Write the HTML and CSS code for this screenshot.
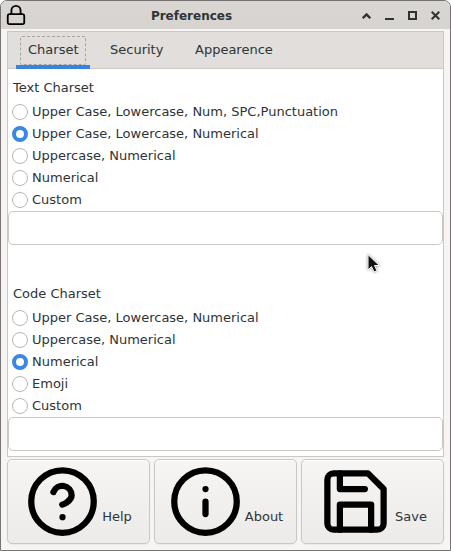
FILE: index.html
```html
<!DOCTYPE html>
<html lang="en">
<head>
<meta charset="utf-8">
<title>Preferences</title>
<link rel="stylesheet" href="styles.css">
</head>
<body>
<div class="window">
  <header class="titlebar">
    <svg class="lock" viewBox="0 0 24 24"><rect x="3" y="11" width="18" height="11" rx="2"/><path d="M7 11V7a5 5 0 0 1 10 0v4"/></svg>
    <h1 class="title">Preferences</h1>
    <div class="controls">
      <svg class="shade" viewBox="0 0 9 9"><path d="M.7 7.200 4.500 3.400l3.800 3.800"/></svg>
      <svg viewBox="0 0 9 9"><path d="M0 8h9"/></svg>
      <svg viewBox="0 0 9 9"><path d="M1 1h7v7H1z"/></svg>
      <svg viewBox="0 0 9 9"><path d="m.7.7 7.6 7.6M8.3.7.7 8.3"/></svg>
    </div>
  </header>
  <main class="notebook">
    <nav class="tabs">
      <div class="tab active"><span class="tab-label">Charset</span></div>
      <div class="tab"><span class="tab-label">Security</span></div>
      <div class="tab"><span class="tab-label">Appearence</span></div>
    </nav>
    <section class="group">
      <h2 class="heading">Text Charset</h2>
      <label class="option"><span class="radio"></span>Upper Case, Lowercase, Num, SPC,Punctuation</label>
      <label class="option"><span class="radio checked"></span>Upper Case, Lowercase, Numerical</label>
      <label class="option"><span class="radio"></span>Uppercase, Numerical</label>
      <label class="option"><span class="radio"></span>Numerical</label>
      <label class="option"><span class="radio"></span>Custom</label>
      <div class="entry"></div>
    </section>
    <section class="group">
      <h2 class="heading">Code Charset</h2>
      <label class="option"><span class="radio"></span>Upper Case, Lowercase, Numerical</label>
      <label class="option"><span class="radio"></span>Uppercase, Numerical</label>
      <label class="option"><span class="radio checked"></span>Numerical</label>
      <label class="option"><span class="radio"></span>Emoji</label>
      <label class="option"><span class="radio"></span>Custom</label>
      <div class="entry"></div>
    </section>
  </main>
  <footer class="actions">
    <button class="button"><svg viewBox="0 0 24 24"><circle cx="12" cy="12" r="10"/><path d="M9.09 9a3 3 0 0 1 5.83 1c0 2-3 3-3 3M12 17h.01"/></svg><span>Help</span></button>
    <button class="button"><svg viewBox="0 0 24 24"><circle cx="12" cy="12" r="10"/><path d="M12 16v-4M12 8h.01"/></svg><span>About</span></button>
    <button class="button"><svg viewBox="0 0 24 24"><path d="M19 21H5a2 2 0 0 1-2-2V5a2 2 0 0 1 2-2h11l5 5v11a2 2 0 0 1-2 2z"/><path d="M17 21v-8H7v8M7 3v5h8"/></svg><span>Save</span></button>
  </footer>
  <svg class="cursor" viewBox="0 0 14 20"><path d="M1 1v15l3.500-3.500L7 18l3-1.300-2.500-5.200H12z"/></svg>
</div>
</body>
</html>
```
FILE: styles.css
```css
* { box-sizing: border-box; }
body {
  margin: 0;
  background: #fff;
  color: #2e3436;
  font: 13px/16px "DejaVu Sans", sans-serif;
}
.window {
  position: relative;
  width: 451px;
  height: 551px;
  border: 1px solid #777372;
  border-radius: 7px 7px 0 0;
  background: #f6f5f4;
  overflow: hidden;
}
svg {
  display: block;
  fill: none;
  stroke: #000;
  stroke-width: 2;
  stroke-linecap: round;
  stroke-linejoin: round;
}
.titlebar {
  display: grid;
  grid-template-columns: 32px 317px 100px;
  align-items: center;
  height: 28px;
  background: linear-gradient(#dad6d3, #d7d3cf);
}
.lock { width: 22px; height: 22px; margin-left: 4px; }
.title {
  margin: 2px 0 0;
  font-size: 12px;
  font-weight: bold;
  text-align: center;
}
.controls {
  display: flex;
  justify-content: flex-end;
  gap: 14px;
  padding: 1px 10px 0 0;
}
.controls svg {
  width: 9px;
  height: 9px;
  stroke: #2e3436;
  stroke-linecap: butt;
  stroke-linejoin: miter;
}
.controls .shade { stroke-width: 2.4; }
.notebook {
  height: 426px;
  margin: 2px 6px 0;
  border: 1px solid #cdc7c2;
  background: #fff;
}
.tabs {
  display: grid;
  grid-template-columns: 74px 77px 101px;
  column-gap: 8px;
  height: 37px;
  padding-left: 8px;
  background: #e1dedb;
  border-bottom: 1px solid #cdc7c2;
}
.tab {
  height: 37px;
  padding: 4px 4px 0;
}
.tab.active { border-bottom: 4px solid #3584e4; }
.tab-label {
  display: block;
  padding: 5px 7px 6px;
  border: 1px solid transparent;
}
.active .tab-label { border: 1px dashed #a4a6a4; border-radius: 2px; }
.group { height: 206px; padding-top: 11px; }
.heading {
  height: 21px;
  margin: 0 0 0 5px;
  font-size: inherit;
  font-weight: normal;
}
.option {
  display: flex;
  align-items: center;
  gap: 4px;
  height: 22px;
  padding-left: 4px;
}
.radio {
  width: 16px;
  height: 16px;
  border: 1px solid #bcb5ae;
  border-radius: 50%;
  background: #fff;
}
.radio.checked { border: 4px solid #3b87e5; }
.entry {
  height: 34px;
  border: 1px solid #cdc7c2;
  border-radius: 5px;
}
.actions {
  display: grid;
  grid-template-columns: 143px 143px 143px;
  gap: 4px;
  margin: 2px 6px 0;
}
.button {
  display: flex;
  align-items: center;
  justify-content: center;
  gap: 2px;
  height: 85px;
  padding: 0;
  border: 1px solid #cdc7c2;
  border-radius: 5px;
  background: linear-gradient(#f6f5f4, #edebe9);
  box-shadow: inset 0 1px #fff, 0 1px 2px #0000000d;
  color: inherit;
  font: inherit;
}
.button svg { width: 75px; height: 75px; }
.button span { padding-top: 30px; }
.cursor {
  position: absolute;
  left: 366px;
  top: 253px;
  width: 14px;
  height: 20px;
  fill: #111;
  stroke: #fff;
  stroke-width: 1;
  stroke-linejoin: miter;
  filter: drop-shadow(0 0 1px #777);
}
```
